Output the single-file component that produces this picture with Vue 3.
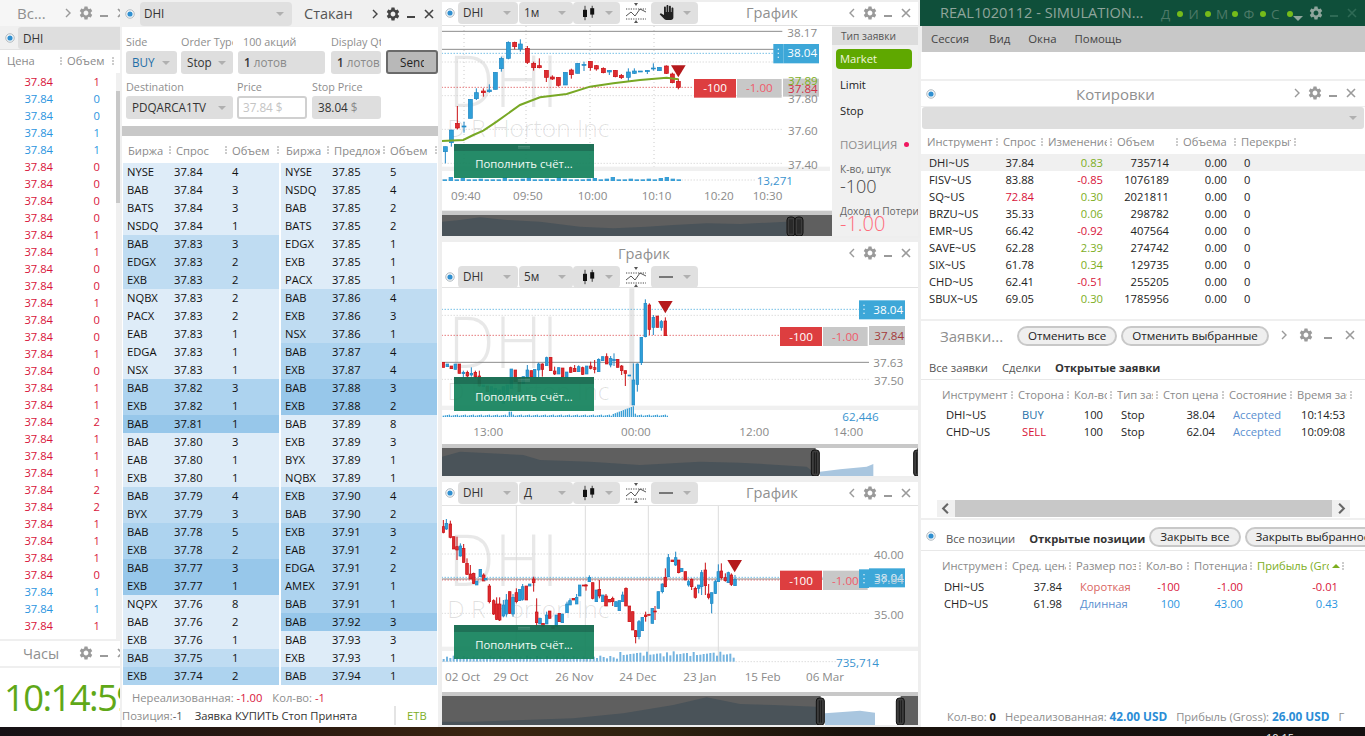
<script setup>
const parseBook = s => s.split(';').map(r => { const p = r.trim().split(' '); return { ex: p[0], price: p[1], vol: p[2], lvl: p[3] } })
const bid = parseBook('NYSE 37.84 4 0;BAB 37.84 3 0;BATS 37.84 3 0;NSDQ 37.84 1 0;BAB 37.83 3 1;EDGX 37.83 2 1;EXB 37.83 2 1;NQBX 37.83 2 0;PACX 37.83 2 0;EAB 37.83 1 0;EDGA 37.83 1 0;NSX 37.83 1 0;BAB 37.82 3 2;EXB 37.82 1 2;BAB 37.81 1 3;BAB 37.80 3 0;EAB 37.80 1 0;EXB 37.80 1 0;BAB 37.79 4 1;BYX 37.79 3 1;BAB 37.78 5 2;EXB 37.78 2 2;BAB 37.77 3 3;EXB 37.77 1 3;NQPX 37.76 8 0;BAB 37.76 2 0;EXB 37.76 1 0;BAB 37.75 1 1;EXB 37.74 2 2')
const ask = parseBook('NYSE 37.85 5 0;NSDQ 37.85 4 0;BAB 37.85 2 0;BATS 37.85 2 0;EDGX 37.85 1 0;EXB 37.85 1 0;PACX 37.85 1 0;BAB 37.86 4 1;EXB 37.86 3 1;NSX 37.86 1 1;BAB 37.87 4 2;EXB 37.87 4 2;BAB 37.88 3 3;EXB 37.88 2 3;BAB 37.89 8 0;EXB 37.89 3 0;BYX 37.89 1 0;NQBX 37.89 1 0;EXB 37.90 4 1;BAB 37.90 2 1;EXB 37.91 3 2;EAB 37.91 2 2;EDGA 37.91 2 2;AMEX 37.91 1 2;BAB 37.91 1 2;BAB 37.92 3 3;BAB 37.93 3 0;EXB 37.93 1 0;BAB 37.94 1 1')
const books = [
  { rows: bid, heads: ['Биржа', 'Спрос', 'Объем'] },
  { rows: ask, heads: ['Биржа', 'Предложение', 'Объем'] }
]
const tape = 'r1 b0 b0 b1 b1 r0 r0 r0 r0 r1 r1 r0 r0 r1 r0 r0 r1 r0 r1 r1 r2 r1 r1 r1 r2 r2 r1 r1 r1 r0 b1 b1 r1'.split(' ').map(t => ({ c: t[0], v: t[1] }))

const qHeads = ['Инструмент', 'Спрос', 'Изменение', 'Объем', 'Объема', 'Перекрытие']
const oHeads = ['Инструмент', 'Сторона', 'Кол-во', 'Тип заявки', 'Стоп цена', 'Состояние', 'Время заявки']
const pHeads = ['Инструмент', 'Сред. цена', 'Размер позиции', 'Кол-во', 'Потенциал', 'Прибыль (Gross)']
const quotes = [
  ['DHI~US', '37.84', '', '0.83', 'g', '735714'],
  ['FISV~US', '83.88', '', '-0.85', 'r', '1076189'],
  ['SQ~US', '72.84', 'r', '0.30', 'g', '2021811'],
  ['BRZU~US', '35.33', '', '0.06', 'g', '298782'],
  ['EMR~US', '66.42', '', '-0.92', 'r', '407564'],
  ['SAVE~US', '62.28', '', '2.39', 'g', '274742'],
  ['SIX~US', '61.78', '', '0.34', 'g', '129735'],
  ['CHD~US', '62.41', '', '-0.51', 'r', '255205'],
  ['SBUX~US', '69.05', '', '0.30', 'g', '1785956']
]
const orders = [
  ['DHI~US', 'BUY', 'b', '100', 'Stop', '38.04', 'Accepted', '10:14:53'],
  ['CHD~US', 'SELL', 'r', '100', 'Stop', '62.04', 'Accepted', '10:09:08']
]
const positions = [
  ['DHI~US', '37.84', 'Короткая', 'sr', '-100', '-1.00', '-0.01', 'r'],
  ['CHD~US', '61.98', 'Длинная', 'sb', '100', '43.00', '0.43', 'b']
]

const parseC = s => s.trim().split(/\s+/).map(t => {
  const n = t.slice(1).split(',').map(Number)
  return { c: t[0], x: n[0], t: n[1], b: n[2], h: n[3] ?? n[1], l: n[4] ?? n[2] }
})
const c1 = parseC('b16,440,455,440,490 b34,390,428,390,440 r52,370,384,318,388 b72,378,380,365,398 b91,298,355 b109,278,296,265,300 r130,273,278,265,290 b148,270,275,253,278 b166,217,268 b184,175,206,170,215 b205,127,175,124,178 r224,127,140,125,148 b241,132,147,118,155 r262,145,187,138,192 r281,190,203,185,212 r298,197,203,175,205 r319,211,232,211,246 r337,231,237,226,240 r355,232,256,232,260 b376,217,255 r394,210,224,206,236 b413,190,220 b432,193,195,185,213 r451,184,203,184,212 r469,197,207,195,212 r490,205,218,202,220 b508,211,216,210,225 r526,211,230,210,232 r544,226,233,222,237 b565,216,232,205,243 b583,213,220,205,222 b601,213,216 b622,211,215,210,222 b640,204,206,190,212 b658,202,212 r679,198,220,196,222 r697,222,248,218,250 r715,244,262,236,268')
const c2 = parseC('r10,367,382 b22,372,380 r34,378,386 b46,372,388 r58,372,400 b70,397,401,392,412 r82,397,408,392,412 b94,400,405,382,410 r106,397,410,392,415 r118,408,438,392,440 b130,435,440 r142,438,455 b154,440,462 b166,445,470 b178,450,480 b190,440,490 b202,435,470 b214,387,445 r226,390,425 r238,415,455 b250,410,430 b262,390,412,375,412 r274,392,410 b284,388,412 b296,372,390,368,412 r307,372,388,370,410 b320,353,377,350,377 r332,352,392 r344,393,402,380,405 b356,383,402 r368,384,410 b380,396,412 r392,383,397,380,398 r404,385,395,375,395 b416,380,395,376,395 r428,383,403,380,405 b440,378,402 r452,378,385,365,388 r464,383,388,360,400 b476,358,395,355,395 b488,350,362 r500,350,372,340,372 b512,355,375,348,382 b522,358,362,340,378 r533,358,382 r545,378,392,375,405 r556,392,400,392,438 b568,405,407 b580,420,495,370,495 b592,372,433,370,455 b604,292,368,292,375 b616,190,290,178,292 r628,195,268,190,285 b640,232,262,225,285 r652,228,262 b664,245,262,240,272 r676,243,287,232,287')
const c3 = parseC('r10,140,157,120,160 b19,130,147,117,150 r31,132,172,122,175 r41,170,207 r51,200,210,170,240 b61,198,228,190,230 r71,205,247,192,248 r81,250,283,235,285 r91,282,297,255,297 r101,280,310,278,312 b110,303,315 b121,268,290 r131,285,303,280,303 b137,295,300 r148,318,365,312,370 r161,362,402,358,405 r170,372,418,352,420 r179,372,420,352,423 b190,375,408,360,412 b199,360,402,342,410 r209,335,400,335,402 b219,352,402,342,410 r229,338,365,325,370 b239,328,362 b248,320,358,312,362 r259,318,360 b269,312,318 r281,297,308,290,335 r290,396,428,355,440 b300,415,432 r309,430,440 b320,405,432,395,432 r329,393,415 r339,440,445 b349,405,440 r358,400,425 b367,402,428 b381,372,398,365,398 b390,362,375,355,375 r400,355,360 b410,352,372,342,372 b419,315,348 r431,315,318 r438,315,318,312,332 b448,292,305,286,305 r458,308,355,308,358 b469,330,365 r478,328,348,300,355 b488,345,365 r498,348,378,342,378 r508,358,366 r518,355,365,350,378 b528,365,380 b538,362,392 b548,345,365,335,365 r558,325,378,322,378 r568,378,425 r578,395,450 r587,452,470,450,490 b597,425,470,420,478 b607,412,452 r617,405,410,395,425 r627,403,405 b637,385,430 r645,393,395,378,420 b655,335,385 b667,312,335,310,340 r676,292,320,265,322 b685,233,290,222,292 r697,240,245 b707,233,255,215,258 r716,240,278,240,280 b725,265,275 r736,275,300 b746,305,315,300,320 r755,298,320,295,330 r766,325,352,320,356 b776,315,325,318,340 b785,278,320,270,345 r796,270,317,248,345 r806,342,352,312,358 b815,338,370,338,400 b826,305,340,300,342 b835,275,305,253,305 r844,273,293,250,298 r856,293,302,280,305 b865,278,308,275,308 r874,285,313,280,318 b885,298,317,285,318')

const jitter = i => (i * 37) % 7
const vols1 = Array.from({ length: 40 }, (_, i) => {
  const extra = i % 9 === 1 ? 7 : i % 11 === 3 ? 4 : jitter(i) > 4 ? 2 : 0
  return { x: 8 + i * 18, y: 538 - extra, h: 5 + extra }
})
const vols2 = Array.from({ length: 113 }, (_, i) => {
  const x = 8 + i * 6
  let h = 4 + (i * 13) % 4
  if (x > 205 && x < 215) h = 16
  if (x > 515 && x < 580) h = 8 + (x - 515) / 2.6
  if (x > 580 && x < 590) h = 10
  return { x, y: 531 - h, h }
})
const vols3 = Array.from({ length: 88 }, (_, i) => {
  const x = 8 + i * 10
  const h = 8 + (i * 7) % 11 + (i > 52 ? 8 + (i * 5) % 10 : 0) * (i > 86 ? 0 : 1)
  return { x, y: 545 - h, h }
})

const makeLabels = L => L.map(([x, y, s, fill, cls = 'ax', anchor = 'start']) => ({ x, y, s, fill, cls, anchor }))
const GR = '#8a8a8a'
const charts = [
  {
    id: 'c1', cls: 'chart1', title: 'График', tf: '1м', hand: true, inline: true, panel: true,
    vb: '0 78 1176 636', w: 392, h: 212, cw: 12, candles: c1,
    mark: 320, mark2: 412, banner: 432, vols: vols1, volw: 13, volc: '#3a9fd6',
    under: [[5, 500, 1165, 13, '#f0f0f0']],
    v: [[72, 78, 500, 'd'], [258, 78, 500, 'd'], [450, 78, 500, 'd'], [642, 78, 500, 'd']],
    lines: [[5, 94, 1027, '#8c8c8c', 0], [5, 148, 1027, '#8c8c8c', 0], [5, 160, 1000, '#2f9fd8', 1], [5, 262, 760, '#d9363a', 1], [5, 186, 1030, '#ccc', 1], [5, 287, 1030, '#ccc', 1], [5, 388, 1030, '#ccc', 1], [5, 490, 1030, '#ccc', 1], [5, 540, 950, '#ccc', 1]],
    green: '5,423 70,420 100,405 130,392 170,365 240,315 300,292 380,282 450,260 520,250 600,240 680,233 715,238',
    tri: '693,196 737,196 715,232',
    over: [[1000, 132, 30, 58, '#3da7d8'], [1030, 132, 107, 58, '#3da7d8'], [762, 237, 126, 56, '#dd3e40'], [891, 237, 134, 56, '#c8c8c8'], [1029, 236, 108, 54, '#c8c8c8']],
    dots: [1015, 160],
    labels: makeLabels([[1042, 98, '38.17', GR], [1042, 157, '38.04', '#fff'], [825, 263, '-100', '#fff', 'ax', 'middle'], [958, 263, '-1.00', '#ef5a6a', 'ax', 'middle'], [1044, 240, '37.89', '#7dae1e'], [1044, 266, '37.84', '#d32f45'], [1044, 295, '37.80', GR], [1044, 392, '37.60', GR], [1044, 493, '37.40', GR], [950, 540, '13,271', '#3a94cf'], [33, 587, '09:40', GR], [219, 587, '09:50', GR], [413, 587, '10:00', GR], [605, 587, '10:10', GR], [792, 587, '10:20', GR], [938, 587, '10:30', GR]]),
    nav: { band: 632, top: 645, bot: 714, dark: '6,714 6,665 60,660 120,652 200,660 300,665 420,680 520,685 620,680 700,675 800,670 900,672 1040,665 1040,714', hs: [1040, 1064], win: null }
  },
  {
    id: 'c2', cls: 'chart2', title: 'График', tf: '5м', hand: false, inline: false,
    vb: '0 144 1440 570', w: 480, h: 190, cw: 8, candles: c2,
    mark: 385, mark2: 480, banner: 411, vols: vols2, volw: 4, volc: '#3a9fd6',
    under: [[5, 497, 1430, 13, '#f0f0f0'], [568, 145, 15, 352, '#e6e6e6']],
    v: [],
    lines: [[5, 226, 1290, '#ccc', 1], [5, 418, 1290, '#ccc', 1], [5, 367, 1287, '#8c8c8c', 0], [5, 208, 1257, '#2f9fd8', 1], [5, 286, 1020, '#d9363a', 1]],
    green: '',
    tri: '654,183 698,183 676,220',
    over: [[1257, 181, 30, 57, '#3da7d8'], [1287, 181, 108, 57, '#3da7d8'], [1020, 261, 126, 57, '#dd3e40'], [1149, 261, 134, 57, '#c8c8c8'], [1287, 258, 108, 57, '#c8c8c8']],
    dots: [1272, 208],
    labels: makeLabels([[1300, 207, '38.04', '#fff'], [1083, 288, '-100', '#fff', 'ax', 'middle'], [1216, 288, '-1.00', '#ef5a6a', 'ax', 'middle'], [1303, 286, '37.84', '#a33a3a'], [1300, 368, '37.63', GR], [1302, 422, '37.50', GR], [1207, 530, '62,446', '#3a94cf'], [100, 575, '13:00', GR], [543, 575, '00:00', GR], [898, 575, '12:00', GR], [1180, 575, '14:00', GR]]),
    nav: { band: 612, top: 624, bot: 714, dark: '6,714 6,650 60,635 150,640 250,645 300,660 450,665 600,675 780,665 900,668 1100,680 1125,700 1125,714', light: '1140,695 1200,688 1280,680 1300,672 1300,714 1140,714', hs: [1113, 1420], win: [1127, 1432] }
  },
  {
    id: 'c3', cls: 'chart3', title: 'График', tf: 'Д', hand: false, inline: true,
    vb: '0 78 1440 663', w: 480, h: 221, cw: 8, candles: c3,
    mark: 318, mark2: 413, banner: 435, vols: vols3, volw: 6, volc: '#76b5e0',
    under: [[5, 500, 1430, 13, '#f0f0f0']],
    v: [[229, 78, 545, 's'], [436, 78, 545, 's'], [625, 78, 545, 's'], [835, 78, 545, 's']],
    lines: [[5, 222, 1290, '#ccc', 1], [5, 400, 1290, '#ccc', 1], [5, 545, 1190, '#ccc', 1], [5, 297, 1257, '#8c8c8c', 0], [5, 292, 1257, '#2f9fd8', 1], [5, 300, 1020, '#d9363a', 1]],
    green: '',
    tri: '862,240 906,240 884,277',
    over: [[1020, 272, 126, 58, '#dd3e40'], [1149, 272, 134, 58, '#c8c8c8'], [1257, 268, 30, 56, '#3da7d8'], [1287, 265, 108, 57, '#3da7d8']],
    dots: [1272, 296],
    labels: makeLabels([[1302, 224, '40.00', GR], [1302, 404, '35.00', GR], [1083, 301, '-100', '#fff', 'ax', 'middle'], [1216, 301, '-1.00', '#ef5a6a', 'ax', 'middle'], [1302, 293, '38.04', '#dfeef8'], [1302, 299, '37.84', '#b8d0de'], [1188, 546, '735,714', '#3a94cf'], [15, 590, '02 Oct', GR], [160, 590, '29 Oct', GR], [346, 590, '26 Nov', GR], [538, 590, '24 Dec', GR], [730, 590, '23 Jan', GR], [914, 590, '15 Feb', GR], [1098, 590, '06 Mar', GR]]),
    nav: { band: 636, top: 648, bot: 741, dark: '6,741 6,725 100,725 250,720 400,715 550,700 700,675 800,652 900,672 1000,675 1128,680 1128,741', light: '1155,700 1260,692 1305,698 1305,738 1155,738', hs: [1128, 1368], win: [1142, 1382], winBot: 738 }
  }
]
const ctl = ['chevr', 'gear', 'min', 'close']
const chartCtl = ['chevl', 'gear', 'min', 'close']
const feed = ['Д', 'И', 'М', 'Ф', 'С']
</script>

<template>
  <div class="desk">
    <svg class="defs" aria-hidden="true">
      <symbol id="gear" viewBox="0 0 24 24"><path d="M19.14 12.94c.04-.3.06-.61.06-.94 0-.32-.02-.64-.07-.94l2.03-1.58a.49.49 0 0 0 .12-.61l-1.92-3.32a.488.488 0 0 0-.59-.22l-2.39.96c-.5-.38-1.03-.7-1.62-.94l-.36-2.54a.484.484 0 0 0-.48-.41h-3.84c-.24 0-.43.17-.47.41l-.36 2.54c-.59.24-1.13.57-1.62.94l-2.39-.96c-.22-.08-.47 0-.59.22L2.74 8.87c-.12.21-.08.47.12.61l2.03 1.58c-.05.3-.09.63-.09.94s.02.64.07.94l-2.03 1.58a.49.49 0 0 0-.12.61l1.92 3.32c.12.22.37.29.59.22l2.39-.96c.5.38 1.03.7 1.62.94l.36 2.54c.05.24.24.41.48.41h3.84c.24 0 .44-.17.47-.41l.36-2.54c.59-.24 1.13-.56 1.62-.94l2.39.96c.22.08.47 0 .59-.22l1.92-3.32c.12-.22.07-.47-.12-.61l-2.01-1.58zM12 15.6c-1.98 0-3.6-1.62-3.6-3.6s1.62-3.6 3.6-3.6 3.6 1.62 3.6 3.6-1.62 3.6-3.6 3.6z" fill="currentColor" /></symbol>
      <symbol id="min" viewBox="0 0 14 14"><rect x="3" y="9" width="8" height="2" fill="currentColor" /></symbol>
      <symbol id="close" viewBox="0 0 14 14"><path d="M3 3l8 8M11 3l-8 8" stroke="currentColor" stroke-width="1.6" fill="none" /></symbol>
      <symbol id="chevr" viewBox="0 0 14 14"><path d="M5 3l4 4-4 4" stroke="currentColor" stroke-width="1.4" fill="none" /></symbol>
      <symbol id="chevl" viewBox="0 0 14 14"><path d="M9 3L5 7l4 4" stroke="currentColor" stroke-width="1.4" fill="none" /></symbol>
      <symbol id="radio" viewBox="0 0 10 10"><circle cx="5" cy="5" r="4.2" fill="#fff" stroke="#aab4bb" stroke-width="1" /><circle cx="5" cy="5" r="2.6" fill="#2f8fd0" /></symbol>
      <symbol id="candles" viewBox="0 0 20 20"><path d="M5 1v18M14 1v15" stroke="#111" stroke-width="1" /><rect x="2.5" y="6" width="5" height="9" fill="#111" /><rect x="11.5" y="4" width="5" height="8" fill="#111" /></symbol>
      <symbol id="indic" viewBox="0 0 22 22"><path d="M1 7h20M1 17h20" stroke="#333" stroke-width=".9" stroke-dasharray="1.2 1.2" fill="none" /><path d="M1 14l5-4 4 4 5-7 6 3" stroke="#555" stroke-width="1" fill="none" /><path d="M9 1h4l-2 3zM9 21h4l-2-3z" fill="#555" /></symbol>
      <symbol id="hand" viewBox="0 0 24 24"><path d="M23 5.5V20c0 2.2-1.8 4-4 4h-7.3c-1.08 0-2.1-.43-2.85-1.19L1 14.83s1.26-1.23 1.3-1.25c.22-.19.49-.29.79-.29.22 0 .42.06.6.16.04.01 4.31 2.46 4.31 2.46V4c0-.83.67-1.5 1.5-1.5S11 3.17 11 4v7h1V1.5c0-.83.67-1.5 1.5-1.5S15 .67 15 1.5V11h1V2.5c0-.83.67-1.5 1.5-1.5s1.5.67 1.5 1.5V11h1V5.5c0-.83.67-1.5 1.5-1.5s1.5.67 1.5 1.5z" fill="#222" /></symbol>
    </svg>

    <div class="taskbar"><span class="taskclock">10:15</span></div>

    <!-- Tape window -->
    <section class="win tape">
      <header class="tape-title">
        <span class="title">Вс...</span>
        <div class="ctl lite"><span v-for="n in ctl" :key="n" class="ci"><svg :class="'i-' + n"><use :href="'#' + n" /></svg></span></div>
      </header>
      <div class="tape-sym">
        <svg class="radio"><use href="#radio" /></svg>
        <div class="sym-box">DHI</div>
      </div>
      <div class="tape-head"><div class="th"><span>Цена</span></div><div class="th"><span>Объем</span></div></div>
      <div class="tape-body">
        <div class="tape-rows">
          <div v-for="(r, i) in tape" :key="i" class="tape-row" :class="r.c">
            <span>37.84</span><span>{{ r.v }}</span>
          </div>
        </div>
        <div class="vscroll"><i class="thumb"></i></div>
      </div>
    </section>

    <!-- Clock -->
    <section class="win clock">
      <header class="clock-title">
        <span class="title small">Часы</span>
        <div class="ctl lite"><span class="ci"><svg class="i-gear"><use href="#gear" /></svg></span><span class="ci"><svg class="i-min"><use href="#min" /></svg></span><span class="ci"><svg class="i-close"><use href="#close" /></svg></span></div>
      </header>
      <div class="clock-time">10:14:59</div>
    </section>

    <!-- Depth of market -->
    <section class="win dom">
      <header class="dom-title">
        <svg class="radio"><use href="#radio" /></svg>
        <div class="dom-sym"><span>DHI</span><i class="caret"></i></div>
        <span class="dom-name">Стакан</span>
        <div class="ctl dark"><span v-for="n in ctl" :key="n" class="ci"><svg :class="'i-' + n"><use :href="'#' + n" /></svg></span></div>
      </header>
      <div class="form">
        <div class="form-row">
          <label class="fld w51"><span>Side</span><div class="box blue">BUY<i class="caret"></i></div></label>
          <label class="fld w52"><span>Order Type</span><div class="box">Stop<i class="caret"></i></div></label>
          <label class="fld w87"><span class="in4">100 акций</span><div class="box"><b>1</b>&nbsp;<em>лотов</em></div></label>
          <label class="fld w50"><span>Display Qty</span><div class="box"><b>1</b>&nbsp;<em>лотов</em></div></label>
          <div class="send"><span>Send</span></div>
        </div>
        <div class="form-row r2">
          <label class="fld w107"><span>Destination</span><div class="box">PDQARCA1TV<i class="caret"></i></div></label>
          <label class="fld w70"><span>Price</span><div class="box off">37.84 $</div></label>
          <label class="fld w69"><span>Stop Price</span><div class="box">38.04&nbsp;<em>$</em></div></label>
        </div>
      </div>
      <div class="dom-bar"></div>
      <div class="book">
        <div v-for="(bk, bi) in books" :key="bi" class="book-side">
          <div class="book-head"><div v-for="h in bk.heads" :key="h" class="th"><span>{{ h }}</span></div></div>
          <div v-for="(r, i) in bk.rows" :key="i" class="book-row" :class="'l' + r.lvl">
            <span>{{ r.ex }}</span><span>{{ r.price }}</span><span>{{ r.vol }}</span>
          </div>
        </div>
      </div>
      <div class="dom-pnl"><span class="mut">Нереализованная:</span> <span class="rd">-1.00</span><span class="mut gap">Кол-во:</span> <span class="rd">-1</span></div>
      <div class="dom-status">
        <div class="st-l"><span class="mut">Позиция:</span>-1<span class="st-msg">Заявка КУПИТЬ Стоп Принята</span></div>
        <div class="st-r">ETB</div>
      </div>
    </section>

    <!-- Charts -->
    <section v-for="ch in charts" :key="ch.id" class="win chart" :class="ch.cls">
      <header v-if="!ch.inline" class="chart-title">
        <span class="title">{{ ch.title }}</span>
        <div class="ctl"><span v-for="n in chartCtl" :key="n" class="ci"><svg :class="'i-' + n"><use :href="'#' + n" /></svg></span></div>
      </header>
      <div class="tools">
        <svg class="radio"><use href="#radio" /></svg>
        <div class="seg s-sym">DHI<i class="caret"></i></div>
        <div class="seg s-tf">{{ ch.tf }}<i class="caret"></i></div>
        <div class="seg s-kind"><svg class="ti"><use href="#candles" /></svg><i class="caret"></i></div>
        <svg class="indic"><use href="#indic" /></svg>
        <div class="seg s-draw">
          <svg v-if="ch.hand" class="ti hand"><use href="#hand" /></svg>
          <span v-else class="dash"></span>
          <i class="caret"></i>
        </div>
        <template v-if="ch.inline">
          <span class="title inl">{{ ch.title }}</span>
          <div class="ctl"><span v-for="n in chartCtl" :key="n" class="ci"><svg :class="'i-' + n"><use :href="'#' + n" /></svg></span></div>
        </template>
      </div>
      <div class="chart-body">
        <svg class="plot" :width="ch.w" :height="ch.h" :viewBox="ch.vb" preserveAspectRatio="none">
          <rect v-for="(r, i) in ch.under" :key="'u' + i" :x="r[0]" :y="r[1]" :width="r[2]" :height="r[3]" :fill="r[4]" />
          <text x="25" :y="ch.mark" class="wm" textLength="330" lengthAdjust="spacingAndGlyphs">DHI</text>
          <text x="22" :y="ch.mark2" class="wm2" textLength="486" lengthAdjust="spacingAndGlyphs">D R Horton Inc</text>
          <line v-for="(l, i) in ch.v" :key="'v' + i" :x1="l[0]" :x2="l[0]" :y1="l[1]" :y2="l[2]" :stroke="l[3] === 's' ? '#ddd' : '#ccc'" stroke-width="3" :stroke-dasharray="l[3] === 'd' ? '3 9' : null" />
          <line v-for="(l, i) in ch.lines" :key="'h' + i" :x1="l[0]" :x2="l[2]" :y1="l[1]" :y2="l[1]" :stroke="l[3]" stroke-width="3" :stroke-dasharray="l[4] ? '3 6' : null" />
          <rect v-for="(v, i) in ch.vols" :key="'b' + i" :x="v.x" :y="v.y" :width="ch.volw" :height="v.h" :fill="ch.volc" />
          <g v-for="(k, i) in ch.candles" :key="'k' + i" :class="'cd-' + k.c">
            <line :x1="k.x" :x2="k.x" :y1="k.h" :y2="k.l" stroke-width="3" />
            <rect :x="k.x - ch.cw / 2" :y="k.t" :width="ch.cw" :height="Math.max(k.b - k.t, 3)" />
          </g>
          <polyline v-if="ch.green" :points="ch.green" class="ma" />
          <polygon :points="ch.tri" fill="#b5191c" />
          <g class="banner">
            <rect x="42" :y="ch.banner" width="420" height="102" fill="#1a8560" />
            <rect x="42" :y="ch.banner" width="420" height="21" fill="#146a4f" />
            <path :d="`M234 ${ch.banner + 7}h36M234 ${ch.banner + 12}h36`" stroke="#5a9a85" stroke-width="2" />
          </g>
          <text x="252" :y="ch.banner + 58" class="ax bn" text-anchor="middle" dominant-baseline="central">Пополнить счёт...</text>
          <rect v-for="(r, i) in ch.over" :key="'o' + i" :x="r[0]" :y="r[1]" :width="r[2]" :height="r[3]" :fill="r[4]" />
          <g fill="#d8ecf7"><rect :x="ch.dots[0] - 2" :y="ch.dots[1] - 14" width="4" height="4" /><rect :x="ch.dots[0] - 2" :y="ch.dots[1] - 2" width="4" height="4" /><rect :x="ch.dots[0] - 2" :y="ch.dots[1] + 10" width="4" height="4" /></g>
          <text v-for="(t, i) in ch.labels" :key="'t' + i" :x="t.x" :y="t.y" :class="t.cls" :fill="t.fill" :text-anchor="t.anchor" dominant-baseline="central">{{ t.s }}</text>
          <rect x="6" :y="ch.nav.band" width="1428" :height="ch.nav.top - ch.nav.band" fill="#c8c8c8" />
          <rect x="6" :y="ch.nav.top" width="1428" :height="ch.nav.bot - ch.nav.top" fill="#5f5f5f" />
          <rect v-if="ch.nav.win" :x="ch.nav.win[0]" :y="ch.nav.top" :width="ch.nav.win[1] - ch.nav.win[0]" :height="(ch.nav.winBot || ch.nav.bot) - ch.nav.top" fill="#fff" />
          <polygon :points="ch.nav.dark" fill="#4a5359" />
          <polygon v-if="ch.nav.light" :points="ch.nav.light" fill="#a9c6df" />
          <g v-for="(hx, i) in ch.nav.hs" :key="'hd' + i">
            <rect :x="hx + 1" :y="ch.nav.top + 6" width="24" :height="ch.nav.bot - ch.nav.top - 12" rx="9" fill="#3d3d3d" stroke="#111" stroke-width="3" />
            <path :d="`M${hx + 10} ${ch.nav.top + 13}V${ch.nav.bot - 13}M${hx + 16} ${ch.nav.top + 13}V${ch.nav.bot - 13}`" stroke="#111" stroke-width="2.5" />
          </g>
        </svg>
        <aside v-if="ch.panel" class="side">
          <div class="side-h">Тип заявки</div>
          <div class="side-opt on">Market</div>
          <div class="side-opt">Limit</div>
          <div class="side-opt">Stop</div>
          <div class="side-pos">ПОЗИЦИЯ<i class="pdot"></i></div>
          <div class="side-k">К-во, штук</div>
          <div class="side-v">-100</div>
          <div class="side-k two">Доход и Потери</div>
          <div class="side-v pink">-1.00</div>
        </aside>
      </div>
    </section>

    <!-- Main account column -->
    <section class="main-col">
      <header class="acct">
        <span class="acct-name">REAL1020112 - SIMULATION...</span>
        <div class="feeds"><span v-for="f in feed" :key="f" class="feed">{{ f }}<i></i></span></div>
        <i class="acct-caret"></i>
        <div class="ctl acctctl"><span class="ci"><svg class="i-gear"><use href="#gear" /></svg></span><span class="ci"><svg class="i-min"><use href="#min" /></svg></span><span class="ci"><svg class="i-close"><use href="#close" /></svg></span></div>
      </header>
      <nav class="menu"><span>Сессия</span><span>Вид</span><span>Окна</span><span>Помощь</span></nav>
      <div class="blank"></div>

      <div class="panel quotes">
        <header class="q-title">
          <svg class="radio"><use href="#radio" /></svg>
          <span class="title center">Котировки</span>
          <div class="ctl lite"><span v-for="n in ctl" :key="n" class="ci"><svg :class="'i-' + n"><use :href="'#' + n" /></svg></span></div>
        </header>
        <div class="q-select"><i class="caret"></i></div>
        <div class="q-grid q-head"><div v-for="h in qHeads" :key="h" class="th"><span>{{ h }}</span></div></div>
        <div v-for="(q, i) in quotes" :key="q[0]" class="q-grid q-row" :class="{ sel: i === 0 }">
          <span class="pl2">{{ q[0] }}</span>
          <span class="num" :class="q[2]">{{ q[1] }}</span>
          <span class="num" :class="q[4]">{{ q[3] }}</span>
          <span class="num">{{ q[5] }}</span>
          <span class="num">0.00</span>
          <span class="pl3">0</span>
        </div>
      </div>

      <div class="panel orders">
        <header class="o-title">
          <span class="title">Заявки...</span>
          <button class="pill">Отменить все</button>
          <button class="pill">Отменить выбранные</button>
          <div class="ctl lite"><span v-for="n in ctl" :key="n" class="ci wide"><svg :class="'i-' + n"><use :href="'#' + n" /></svg></span></div>
        </header>
        <div class="tabs"><span>Все заявки</span><span>Сделки</span><span class="active">Открытые заявки</span></div>
        <div class="o-grid o-head"><div v-for="h in oHeads" :key="h" class="th"><span>{{ h }}</span></div></div>
        <div v-for="o in orders" :key="o[0]" class="o-grid o-row">
          <span class="pl4">{{ o[0] }}</span>
          <span class="pl4" :class="o[2] === 'b' ? 'navy' : 'r'">{{ o[1] }}</span>
          <span class="num">{{ o[3] }}</span>
          <span class="pl4">{{ o[4] }}</span>
          <span class="num">{{ o[5] }}</span>
          <span class="pl4 acc">{{ o[6] }}</span>
          <span class="pl4">{{ o[7] }}</span>
        </div>
        <div class="spring"></div>
        <div class="hscroll">
          <svg class="harr" viewBox="0 0 18 18"><path d="M11 4l-5 5 5 5" stroke="#666" stroke-width="2.2" fill="none" /></svg>
          <div class="hthumb"></div>
          <svg class="harr" viewBox="0 0 18 18"><path d="M7 4l5 5-5 5" stroke="#666" stroke-width="2.2" fill="none" /></svg>
        </div>
      </div>

      <div class="panel pos">
        <header class="p-title">
          <svg class="radio"><use href="#radio" /></svg>
          <span class="p-tab">Все позиции</span>
          <span class="p-tab active">Открытые позиции</span>
          <button class="pill">Закрыть все</button>
          <button class="pill clip">Закрыть выбранное</button>
        </header>
        <div class="p-grid p-head"><div v-for="(h, i) in pHeads" :key="h" class="th" :class="{ grn: i === 5 }"><span>{{ h }}</span></div></div>
        <div v-for="p in positions" :key="p[0]" class="p-grid p-row">
          <span class="pl2">{{ p[0] }}</span>
          <span class="num">{{ p[1] }}</span>
          <span class="pl4" :class="p[3]">{{ p[2] }}</span>
          <span class="num" :class="p[7]">{{ p[4] }}</span>
          <span class="num" :class="p[7]">{{ p[5] }}</span>
          <span class="num far" :class="p[7]">{{ p[6] }}</span>
        </div>
        <div class="spring"></div>
        <footer class="p-foot">
          <span class="mut">Кол-во:</span> <b>0</b>
          <span class="mut ml">Нереализованная:</span> <b class="blu">42.00 USD</b>
          <span class="mut ml">Прибыль (Gross):</span> <b class="blu">26.00 USD</b>
          <span class="mut ml">Г</span>
        </footer>
      </div>
    </section>
  </div>
</template>

<style>
html, body { margin: 0; padding: 0; overflow: hidden; }
</style>

<style scoped>
.desk {
  position: relative; width: 1365px; height: 736px; overflow: hidden;
  font: 11.2px/1.2 "Open Sans", "Liberation Sans", sans-serif; color: #222;
  background: #efefef;
}
.taskbar {
  position: absolute; left: 0; top: 727px; width: 100%; height: 9px; overflow: hidden;
  background: linear-gradient(90deg, #161216 0%, #2b1a10 22%, #3a2410 36%, #2e2210 48%, #1a120c 62%, #141010 100%);
}
.taskclock { position: absolute; left: 1266px; top: 4px; color: #eee; font-size: 11px; }
.defs { position: absolute; width: 0; height: 0; }
.win { position: absolute; background: #fff; }
.radio { width: 10px; height: 10px; flex: none; }
.title { color: #8f8f8f; font-size: 15px; white-space: nowrap; }
.title.small { font-size: 14.5px; }
.th { position: relative; min-width: 0; padding-right: 10px; color: #8a8a8a; box-sizing: border-box; }
.th > span { display: block; overflow: hidden; white-space: nowrap; }
.th::after { content: ""; position: absolute; right: 5px; top: 50%; height: 8px; margin-top: -4px; border-right: 2px dotted #ccc; }
.num { text-align: right; padding-right: 14px; }
.r { color: #d8143a; }
.g { color: #7dae1e; }
.b { color: #2b95e0; }
.mut { color: #8e8e8e; }
.rd { color: #d8143a; }
.ctl { display: flex; align-items: center; color: #9a9a9a; }
.ctl.dark { color: #444; }
.ci { width: 18px; height: 14px; display: flex; align-items: center; justify-content: center; flex: none; }
.ci svg { width: 14px; height: 14px; display: block; }
.ci .i-gear { width: 16px; height: 16px; }
.caret { display: inline-block; width: 0; height: 0; border: 4px solid transparent; border-top: 4.5px solid #b0b0b0; border-bottom: 0; }

/* tape */
.tape { left: 0; top: 0; width: 120px; height: 639px; overflow: hidden; }
.tape-title { height: 26px; display: flex; align-items: center; padding-left: 17px; background: #f6f6f6; position: relative; }
.tape-title .ctl { position: absolute; left: 59px; top: 6px; }
.tape-sym { height: 23px; display: flex; align-items: center; padding-left: 5px; background: #f0f0f0; border-bottom: 1px solid #e2e2e2; }
.sym-box { margin-left: 3px; flex: 1; height: 22px; line-height: 22px; background: #dedede; padding-left: 5px; font-size: 11.7px; color: #333; border-radius: 3px 0 0 3px; }
.tape-head { height: 23px; display: grid; grid-template-columns: 60px 52px; align-items: center; padding-left: 7px; padding-bottom: 1px; box-sizing: border-box; }
.tape-body { display: flex; height: 567px; }
.tape-rows { flex: 1; }
.tape-row { height: 17px; line-height: 17px; display: grid; grid-template-columns: 53px 47px; }
.tape-row span { text-align: right; }
.vscroll { width: 4px; background: #f0f0f0; }
.vscroll .thumb { display: block; height: 112px; margin-top: 18px; background: #c8c8c8; }

/* clock */
.clock { left: 0; top: 641px; width: 120px; height: 86px; overflow: hidden; }
.clock-title { height: 25px; display: flex; align-items: center; padding-left: 23px; position: relative; border-bottom: 2px solid #efefef; }
.clock-title .ctl { position: absolute; left: 77px; top: 5px; }
.clock-time { font-size: 36.5px; letter-spacing: -1.6px; line-height: 58px; padding-left: 4px; color: #5fa818; white-space: nowrap; }

/* dom */
.dom { left: 120px; top: 0; width: 320px; height: 727px; border: solid #f0f0f0; border-width: 0 2px; box-sizing: border-box; }
.dom-title { height: 27px; background: #f0f0f0; display: flex; align-items: center; padding-left: 3px; }
.dom-sym { width: 152px; height: 24px; margin-left: 5px; background: #e0e0e0; border-radius: 4px; display: flex; align-items: center; justify-content: space-between; padding: 0 8px 0 4px; box-sizing: border-box; font-size: 11.7px; color: #333; }
.dom-name { font-size: 14.5px; margin-left: 12px; color: #555; }
.dom-title .ctl { margin-left: 13px; }
.form { padding: 3px 0 0 4px; height: 99px; box-sizing: border-box; }
.form-row { display: flex; gap: 4px; height: 44px; align-items: flex-end; }
.form-row.r2 { margin-top: 1px; gap: 4px; }
.fld { display: flex; flex-direction: column; gap: 1px; color: #8e8e8e; white-space: nowrap; overflow: hidden; }
.fld > span { height: 17px; line-height: 17px; padding-left: 0; overflow: hidden; font-size: 10.8px; }
.fld > span.in4 { padding-left: 5px; }
.w51 { width: 51px; }
.w52 { width: 52px; }
.w87 { width: 87px; margin-left: 1px; }
.w50 { width: 50px; margin-left: 2px; }
.w107 { width: 107px; }
.w70 { width: 70px; }
.w69 { width: 69px; margin-left: 1px; }
.box { height: 23px; line-height: 23px; background: #dedede; border-radius: 3px; padding: 0 6px; box-sizing: border-box; font-size: 11.7px; color: #333; display: flex; align-items: center; white-space: nowrap; overflow: hidden; position: relative; }
.box .caret { position: absolute; right: 7px; top: 10px; }
.box.blue { color: #1e6fa8; }
.box b { font-weight: 600; }
.box em { font-style: normal; color: #8a8a8a; }
.box.off { background: #fff; border: 2px solid #d0d0d0; color: #c4c4c4; padding-left: 4px; }
.send { width: 52px; height: 24px; margin-left: 1px; background: #b8b8b8; border: 2px solid #6a6a6a; border-radius: 3px; box-sizing: border-box; display: flex; align-items: center; padding-left: 12px; font-size: 11.7px; color: #222; }
.send span { display: block; width: 24px; overflow: hidden; }
.dom-bar { height: 10px; background: #c8c8c8; }
.book { display: flex; gap: 2px; padding-left: 1px; }
.book-side { width: 156px; }
.book-head { height: 27px; display: grid; grid-template-columns: 48px 56px 52px; align-items: center; padding-left: 5px; box-sizing: border-box; }
.book-head .th { padding-top: 2px; }
.book-row { height: 18px; line-height: 18px; display: grid; grid-template-columns: 47px 58px 51px; padding-left: 4px; color: #111; }
.l0 { background: #deecf8; }
.l1 { background: #bfdcf2; }
.l2 { background: #add3ef; }
.l3 { background: #97c7ea; }
.dom-pnl { height: 21px; line-height: 26px; padding-left: 10px; white-space: nowrap; }
.gap { margin-left: 10px; }
.dom-status { height: 22px; display: flex; }
.st-l { flex: 1; line-height: 19px; white-space: nowrap; color: #555; }
.st-msg { margin-left: 12px; color: #333; }
.st-r { width: 44px; height: 19px; border-left: 2px solid #e4e4e4; color: #7dae1e; padding-left: 11px; line-height: 19px; box-sizing: border-box; }

/* charts */
.chart { left: 440px; width: 480px; outline: 2px solid #eee; outline-offset: -2px; overflow: hidden; }
.chart1 { top: 0; height: 238px; }
.chart2 { top: 240px; height: 238px; }
.chart3 { top: 480px; height: 247px; }
.chart-title { height: 26px; display: flex; align-items: center; padding-right: 5px; position: relative; }
.chart-title .title { margin-left: 178px; flex: 1; padding-top: 2px; font-size: 14.6px; }
.tools { height: 26px; display: flex; align-items: center; padding: 0 5px; box-sizing: border-box; border-bottom: 1px solid #e2e2e2; }
.chart2 .tools { height: 22px; }
.tools > .radio { margin-right: 3px; }
.seg { height: 22px; background: #e0e0e0; display: flex; align-items: center; justify-content: space-between; padding: 0 7px 0 5px; box-sizing: border-box; font-size: 11.7px; color: #333; border-radius: 4px; }
.s-sym { width: 60px; margin-right: 1px; }
.s-tf { width: 54px; padding-left: 5px; }
.s-kind { width: 47px; padding-left: 8px; }
.s-draw { width: 47px; padding-left: 8px; margin-left: 4px; }
.ti { width: 16px; height: 16px; }
.ti.hand { width: 15px; height: 15px; }
.indic { width: 22px; height: 22px; margin-left: 5px; }
.dash { width: 14px; height: 2px; background: #777; }
.title.inl { margin-left: 48px; flex: 1; font-size: 14.6px; }
.chart-body { display: flex; }
.plot { display: block; flex: none; }
.wm { font-size: 216px; font-weight: 300; fill: rgba(0, 0, 0, .09); }
.wm2 { font-size: 72px; font-weight: 300; fill: rgba(0, 0, 0, .12); }
.ax { font-size: 35px; }
.bn { fill: #f2fbf6; font-size: 34px; }
.cd-b line { stroke: #1e86c4; }
.cd-b rect { fill: #2f9fd8; stroke: #1e86c4; stroke-width: 2; }
.cd-r line { stroke: #c90f14; }
.cd-r rect { fill: #dd2c30; stroke: #c90f14; stroke-width: 2; }
.ma { fill: none; stroke: #78a825; stroke-width: 6; }
.banner { opacity: .95; }
.side { width: 88px; background: #f0f0f0; height: 212px; box-sizing: border-box; padding-top: 1px; padding-right: 1px; white-space: nowrap; overflow: hidden; }
.side-h { height: 18px; line-height: 18px; background: #dcdcdc; padding-left: 9px; font-size: 10.2px; color: #555; }
.side-opt { height: 26px; line-height: 26px; padding-left: 8px; color: #222; }
.side-opt.on { height: 20px; line-height: 20px; margin: 4px 7px 3px 4px; background: #5fa800; color: #f0f6de; border-radius: 4px; padding-left: 4px; }
.side-pos { margin-top: 12px; padding-left: 8px; height: 17px; font-size: 11.5px; color: #8e8e8e; display: flex; align-items: center; gap: 7px; }
.pdot { width: 5px; height: 5px; border-radius: 50%; background: #f01860; }
.side-k { margin-top: 9px; padding-left: 8px; font-size: 10.2px; color: #666; line-height: 14px; }
.side-k.two { margin-top: 7px; }
.side-v { margin-top: -1px; padding-left: 8px; font-size: 18px; color: #444; line-height: 22px; font-weight: 300; }
.side-v.pink { margin-top: -3px; font-size: 20px; color: #ff6a7a; line-height: 18px; }

/* main column */
.main-col { position: absolute; left: 920px; top: 0; width: 445px; height: 727px; display: flex; flex-direction: column; background: #efefef; }
.acct { height: 26px; background: #0f4f3a; display: flex; align-items: center; flex: none; position: relative; }
.acct-name { margin-left: 20px; color: #8fa59c; font-size: 14.6px; white-space: nowrap; width: 220px; }
.feeds { display: flex; position: absolute; left: 241px; top: 6px; }
.feed { display: flex; align-items: center; justify-content: space-between; width: 22px; margin-right: 5.5px; color: #4d7a68; font-size: 13.5px; }
.feed i { width: 6px; height: 6px; border-radius: 50%; background: #76bb1a; }
.acct-caret { position: absolute; left: 373px; top: 16px; width: 0; height: 0; border: 5px solid transparent; border-top: 5px solid #8fa59c; border-bottom: 0; }
.acctctl { position: absolute; left: 387px; top: 6px; color: #8fa59c; }
.acctctl .i-min, .acctctl .i-close { color: #2e6a55; }
.menu { height: 26px; flex: none; margin-left: 2px; background: #c8c8c8; display: flex; align-items: center; color: #444; font-size: 11.4px; }
.menu span:nth-child(1) { margin-left: 9px; }
.menu span:nth-child(2) { margin-left: 20px; }
.menu span:nth-child(3) { margin-left: 18px; }
.menu span:nth-child(4) { margin-left: 18px; }
.blank { height: 27px; background: #fff; margin-left: 1px; flex: none; }
.panel { background: #fff; margin-top: 2px; margin-left: 1px; flex: none; overflow: hidden; display: flex; flex-direction: column; }
.pl2 { padding-left: 2px; }
.pl3 { padding-left: 3px; }
.pl4 { padding-left: 4px; }
.spring { flex: 1; }

.quotes { height: 238px; }
.q-title { height: 25px; display: flex; align-items: center; padding-left: 5px; position: relative; border-bottom: 1px solid #eee; flex: none; }
.title.center { position: absolute; left: 155px; top: 4px; }
.q-title .ctl { position: absolute; left: 367px; top: 5px; }
.q-select { height: 22px; margin: 0 1px; background: #dedede; border-radius: 3px; display: flex; align-items: center; justify-content: flex-end; padding-right: 7px; flex: none; }
.q-grid { display: grid; grid-template-columns: 76px 45px 69px 66px 58px 60px; padding-left: 6px; }
.q-head { height: 25px; align-items: center; }
.q-row { height: 17px; line-height: 17px; }
.q-row.sel { background: #f0f0f0; }

.orders { height: 197px; }
.o-title { height: 29px; flex: none; display: flex; align-items: center; gap: 4px; padding-left: 19px; position: relative; }
.o-title .title { width: 73px; }
.o-title .ctl { position: absolute; left: 352px; top: 7px; }
.ci.wide { width: 22px; }
.pill { height: 20px; padding: 0 9px; background: #efefef; border: 2px solid #c8c8c8; border-radius: 10px; font: 11.6px/14px "Open Sans", "Liberation Sans", sans-serif; color: #222; white-space: nowrap; flex: none; }
.tabs { height: 30px; flex: none; display: flex; align-items: center; gap: 14px; padding: 7px 0 0 8px; border-bottom: 1px solid #e8e8e8; box-sizing: border-box; color: #555; position: relative; }
.tabs .active { font-weight: 700; color: #333; position: relative; }
.tabs .active::after { content: ""; position: absolute; left: -7px; right: -7px; bottom: -7px; height: 2px; background: #fff; }
.o-grid { display: grid; grid-template-columns: 76px 56px 43px 46px 66px 68px 60px; padding-left: 21px; }
.o-head { height: 23px; align-items: center; margin-top: 3px; }
.o-row { height: 17px; line-height: 17px; white-space: nowrap; }
.navy { color: #1e6fa8; }
.acc { color: #5a8fd0; }
.hscroll { height: 17px; flex: none; margin: 0 15px 1px 16px; background: #f0f0f0; display: flex; align-items: center; }
.harr { width: 18px; height: 17px; flex: none; }
.hthumb { flex: 1; height: 17px; background: #c8c8c8; }

.pos { flex: 1; min-height: 0; }
.p-title { height: 31px; flex: none; display: flex; align-items: center; padding-left: 5px; border-bottom: 1px solid #e8e8e8; box-sizing: border-box; white-space: nowrap; }
.p-title .radio { margin-top: 1px; }
.p-tab { margin-left: 10px; color: #555; padding-top: 8px; }
.p-tab + .p-tab { margin-left: 14px; }
.p-tab.active { font-weight: 700; color: #333; margin-right: 4px; }
.p-title .pill { margin-right: 4px; margin-top: 3px; }
.pill.clip { width: 130px; overflow: hidden; text-align: left; }
.p-grid { display: grid; grid-template-columns: 70px 64px 70px 48px 63px 92px; padding-left: 21px; white-space: nowrap; }
.p-head { height: 24px; align-items: center; margin-top: 3px; }
.p-row { height: 17px; line-height: 17px; }
.p-row .far { grid-column: 6; }
.far { padding-right: 11px; }
.th.grn { color: #7dae1e; padding-right: 20px; }
.th.grn::before { content: ""; position: absolute; right: 9px; top: 50%; margin-top: -2px; border: 4px solid transparent; border-bottom: 4px solid #7dae1e; border-top: 0; }
.sr { color: #d9655f; }
.sb { color: #5a8fd0; }
.p-foot { height: 22px; flex: none; padding-left: 26px; white-space: nowrap; overflow: hidden; line-height: 22px; color: #222; }
.ml { margin-left: 9px; }
.blu { color: #2b8dd6; font-weight: 700; font-size: 11.8px; }
</style>
